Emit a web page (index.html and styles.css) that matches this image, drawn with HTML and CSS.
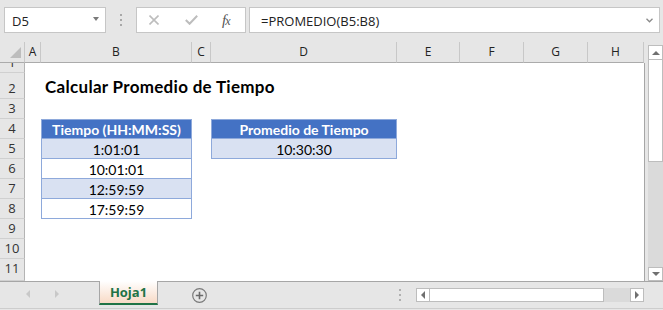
FILE: index.html
```html
<!DOCTYPE html>
<html>
<head>
    <title>Calcular Promedio de Tiempo</title>
    <meta name="viewport" content="width=device-width, initial-scale=1.0">
    <link rel="stylesheet" href="styles.css">
</head>
<body>
    <div class="formula-bar">
        <div class="name-box"><span>D5</span><span class="caret"></span></div>
        <div class="grip"><i></i><i></i><i></i></div>
        <div class="fx-box">
            <svg class="cancel" width="10" height="10" viewBox="0 0 10 10"><path d="M0.5 0.5L9.5 9.5M9.5 0.5L0.5 9.5" stroke="#bdbdbd" stroke-width="1.6" fill="none"/></svg>
            <svg class="enter" width="13" height="10" viewBox="0 0 13 10"><path d="M0.8 5L4.6 8.8L12.2 0.8" stroke="#bdbdbd" stroke-width="2" fill="none"/></svg>
            <span class="fx">f<span>x</span></span>
        </div>
        <div class="formula">
            <span>=PROMEDIO(B5:B8)</span>
            <svg width="7" height="5" viewBox="0 0 7 5"><path d="M0.5 0.8L3.5 3.8L6.5 0.8" stroke="#8a8a8a" stroke-width="1.3" fill="none"/></svg>
        </div>
    </div>

    <div class="sheet">
        <div class="grid">
            <div class="row hdr">
                <div class="corner"><span class="tri"></span></div>
                <div class="ch">A</div>
                <div class="ch">B</div>
                <div class="ch">C</div>
                <div class="ch">D</div>
                <div class="ch">E</div>
                <div class="ch">F</div>
                <div class="ch">G</div>
                <div class="ch">H</div>
            </div>
            <div class="cells">
                <div class="row r1"><div class="rh">1</div></div>
                <div class="row r2">
                    <div class="rh">2</div>
                    <div class="title b">Calcular Promedio de Tiempo</div>
                </div>
                <div class="row"><div class="rh">3</div></div>
                <div class="row">
                    <div class="rh">4</div>
                    <div class="th b">Tiempo (HH:MM:SS)</div>
                    <div class="th d">Promedio de Tiempo</div>
                </div>
                <div class="row">
                    <div class="rh">5</div>
                    <div class="td band b">1:01:01</div>
                    <div class="td band d">10:30:30</div>
                </div>
                <div class="row">
                    <div class="rh">6</div>
                    <div class="td b">10:01:01</div>
                </div>
                <div class="row">
                    <div class="rh">7</div>
                    <div class="td band b">12:59:59</div>
                </div>
                <div class="row">
                    <div class="rh">8</div>
                    <div class="td b">17:59:59</div>
                </div>
                <div class="row"><div class="rh">9</div></div>
                <div class="row"><div class="rh">10</div></div>
                <div class="row r11"><div class="rh">11</div></div>
            </div>
        </div>
        <div class="vscroll">
            <div class="sbtn"><span class="arr up"></span></div>
            <div class="vthumb"></div>
            <div class="vtrack"></div>
            <div class="sbtn down"><span class="arr dn"></span></div>
        </div>
    </div>

    <div class="tabs">
        <span class="nav prev"></span>
        <span class="nav next"></span>
        <div class="tab">Hoja1</div>
        <svg class="add" width="15" height="15" viewBox="0 0 15 15">
            <circle cx="7.5" cy="7.5" r="6.8" stroke="#7a7a7a" stroke-width="1.2" fill="none"/>
            <path d="M7.5 3.8V11.2M3.8 7.5H11.2" stroke="#6a6a6a" stroke-width="1.6"/>
        </svg>
        <div class="dots"><i></i><i></i><i></i></div>
        <div class="hscroll">
            <div class="sbtn"><span class="arr lt"></span></div>
            <div class="hthumb"></div>
            <div class="htrack"></div>
            <div class="sbtn"><span class="arr rt"></span></div>
        </div>
    </div>
</body>
</html>
```

FILE: styles.css
```css
* { box-sizing: border-box; }

body {
    margin: 0;
    width: 663px;
    height: 310px;
    overflow: hidden;
    background: #e6e6e6;
    font-family: "Open Sans", "Noto Sans", sans-serif;
    color: #222;
}

/* formula bar */
.formula-bar {
    display: flex;
    height: 42px;
    padding-top: 7px;
}
.formula-bar > div { height: 26px; }
.name-box {
    margin-left: 4px;
    width: 102px;
    background: #fff;
    border: 1px solid #c6c6c6;
    display: flex;
    align-items: center;
    justify-content: space-between;
    padding: 1px 6px 0 7px;
    font-size: 13px;
}
.caret {
    border-left: 3.5px solid transparent;
    border-right: 3.5px solid transparent;
    border-top: 4px solid #7a7a7a;
    margin-top: -3px;
}
.grip {
    margin-left: 14px;
    width: 2px;
    display: flex;
    flex-direction: column;
    justify-content: center;
    gap: 3px;
}
.grip i { display: block; width: 2px; height: 2px; background: #a8a8a8; }
.fx-box {
    margin-left: 14px;
    width: 110px;
    background: #fff;
    border: 1px solid #c6c6c6;
    display: flex;
    align-items: center;
    padding-left: 12px;
}
.enter { margin-left: 26px; }
.fx {
    margin-left: 24px;
    font-family: "Liberation Serif", serif;
    font-style: italic;
    font-size: 15px;
    color: #555;
    letter-spacing: -1px;
}
.fx span { font-size: 12px; }
.formula {
    margin-left: 3px;
    width: 411px;
    background: #fff;
    border: 1px solid #c6c6c6;
    display: flex;
    align-items: center;
    justify-content: space-between;
    padding: 1px 6px 0 11px;
    font-size: 13px;
}

/* sheet */
.sheet { display: flex; height: 239px; }
.grid { width: 645px; }
.row {
    display: grid;
    grid-template-columns: 25px 16px 151px 19px 186px 63px 64px 64px 56px;
    height: 20px;
}
.hdr { height: 21px; }
.corner, .ch {
    border-right: 1px solid #c8c8c8;
    border-bottom: 1px solid #ababab;
}
.corner {
    display: flex;
    align-items: flex-end;
    justify-content: flex-end;
    padding: 0 3px 4px 0;
}
.tri {
    border-left: 11px solid transparent;
    border-bottom: 11px solid #bdbdbd;
}
.ch {
    text-align: center;
    font-size: 12px;
    line-height: 20px;
    color: #222;
}
.cells {
    height: 218px;
    overflow: hidden;
    background: #fff;
    border-right: 1px solid #a6a6a6;
}
.r1 { height: 10px; }
.r2 { height: 26px; }
.r11 { height: 22px; }
.rh {
    background: #e6e6e6;
    border-right: 1px solid #b4b4b4;
    border-bottom: 1px solid #d0d0d0;
    display: flex;
    align-items: flex-end;
    justify-content: center;
    overflow: hidden;
    font-size: 13px;
    line-height: 20px;
    color: #333;
}
.r11 .rh { padding-bottom: 2px; }
.b { grid-column: 3; }
.d { grid-column: 5; }

.title {
    font-family: Lato, "Liberation Sans", sans-serif;
    font-weight: bold;
    font-size: 17px;
    letter-spacing: 0.3px;
    white-space: nowrap;
    padding: 0 0 2px 4px;
    display: flex;
    align-items: flex-end;
    color: #000;
}
.th, .td {
    font-family: Lato, "Liberation Sans", sans-serif;
    font-size: 14px;
    border: 1px solid #8ea9db;
    border-top: none;
    display: flex;
    align-items: center;
    justify-content: center;
    padding-top: 1px;
    color: #000;
}
.th {
    border-top: 1px solid #8ea9db;
    background: #4472c4;
    color: #fff;
    font-weight: bold;
}
.band { background: #d9e1f2; }

/* scrollbars */
.vscroll {
    margin-left: 3px;
    width: 15px;
    padding-top: 3px;
    display: flex;
    flex-direction: column;
}
.sbtn {
    width: 15px;
    height: 15px;
    background: #fff;
    border: 1px solid #bdbdbd;
    display: flex;
    align-items: center;
    justify-content: center;
}
.vscroll .down { height: 14px; }
.vthumb {
    height: 102px;
    background: #fff;
    border: 1px solid #bdbdbd;
    border-top: none;
}
.vtrack { flex: 1; background: #dadada; }
.arr { width: 0; height: 0; }
.up { border-left: 4px solid transparent; border-right: 4px solid transparent; border-bottom: 4px solid #707070; }
.dn { border-left: 4px solid transparent; border-right: 4px solid transparent; border-top: 4px solid #707070; }
.lt { border-top: 4px solid transparent; border-bottom: 4px solid transparent; border-right: 4px solid #707070; }
.rt { border-top: 4px solid transparent; border-bottom: 4px solid transparent; border-left: 4px solid #707070; }

/* sheet tabs */
.tabs {
    height: 28px;
    border-top: 1px solid #a6a6a6;
    border-bottom: 1px solid #cdcdcd;
    display: flex;
    align-items: center;
}
.nav { width: 0; height: 0; border-top: 4px solid transparent; border-bottom: 4px solid transparent; margin-top: -3px; }
.prev { margin-left: 26px; border-right: 4px solid #c8c8c8; }
.next { margin-left: 25px; border-left: 4px solid #c8c8c8; }
.tab {
    align-self: flex-start;
    margin: -1px 0 0 40px;
    width: 59px;
    height: 24px;
    border: 1px solid #a6a6a6;
    border-top: none;
    border-bottom: 2px solid #217346;
    background: linear-gradient(#fff, #f8dac6);
    color: #217346;
    font-weight: bold;
    font-size: 13px;
    text-align: center;
    line-height: 22px;
}
.add { margin-left: 34px; }
.dots {
    margin-left: 192px;
    display: flex;
    flex-direction: column;
    gap: 3px;
}
.dots i { display: block; width: 2px; height: 2px; background: #b0b0b0; }
.hscroll {
    margin-left: 15px;
    width: 228px;
    height: 14px;
    display: flex;
}
.hscroll .sbtn { width: 14px; height: 14px; }
.hthumb {
    width: 174px;
    background: #fff;
    border: 1px solid #bdbdbd;
    border-left: none;
}
.htrack { flex: 1; background: #dadada; }
```
